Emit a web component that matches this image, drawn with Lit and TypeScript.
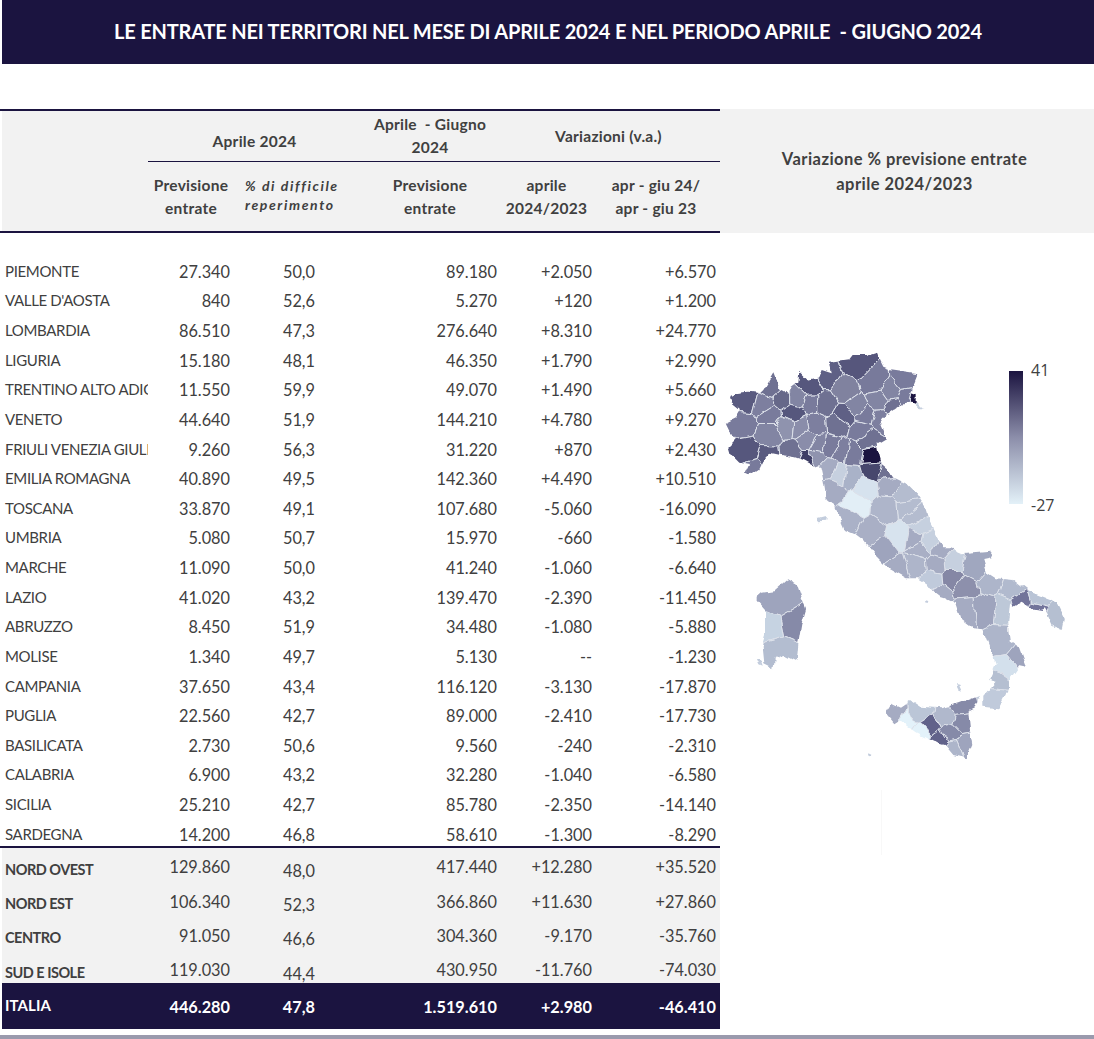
import { LitElement, html, css, svg } from "lit";
import { customElement } from "lit/decorators.js";

const regions: [string, string, string, string, string, string][] = [
  ["PIEMONTE","27.340","50,0","89.180","+2.050","+6.570"],
  ["VALLE D'AOSTA","840","52,6","5.270","+120","+1.200"],
  ["LOMBARDIA","86.510","47,3","276.640","+8.310","+24.770"],
  ["LIGURIA","15.180","48,1","46.350","+1.790","+2.990"],
  ["TRENTINO ALTO ADIGE","11.550","59,9","49.070","+1.490","+5.660"],
  ["VENETO","44.640","51,9","144.210","+4.780","+9.270"],
  ["FRIULI VENEZIA GIULIA","9.260","56,3","31.220","+870","+2.430"],
  ["EMILIA ROMAGNA","40.890","49,5","142.360","+4.490","+10.510"],
  ["TOSCANA","33.870","49,1","107.680","-5.060","-16.090"],
  ["UMBRIA","5.080","50,7","15.970","-660","-1.580"],
  ["MARCHE","11.090","50,0","41.240","-1.060","-6.640"],
  ["LAZIO","41.020","43,2","139.470","-2.390","-11.450"],
  ["ABRUZZO","8.450","51,9","34.480","-1.080","-5.880"],
  ["MOLISE","1.340","49,7","5.130","--","-1.230"],
  ["CAMPANIA","37.650","43,4","116.120","-3.130","-17.870"],
  ["PUGLIA","22.560","42,7","89.000","-2.410","-17.730"],
  ["BASILICATA","2.730","50,6","9.560","-240","-2.310"],
  ["CALABRIA","6.900","43,2","32.280","-1.040","-6.580"],
  ["SICILIA","25.210","42,7","85.780","-2.350","-14.140"],
  ["SARDEGNA","14.200","46,8","58.610","-1.300","-8.290"],
];
const groups = [
  ["NORD OVEST","129.860","48,0","417.440","+12.280","+35.520"],
  ["NORD EST","106.340","52,3","366.860","+11.630","+27.860"],
  ["CENTRO","91.050","46,6","304.360","-9.170","-35.760"],
  ["SUD E ISOLE","119.030","44,4","430.950","-11.760","-74.030"],
];
const total = ["ITALIA","446.280","47,8","1.519.610","+2.980","-46.410"];

/* Map data: a frame three times the picture's scale, with origin at (720,340). */
const land = [
  "30,170 50,160 85,155 120,160 130,150 160,100 170,125 178,145 190,150 205,165 215,140 235,125 238,98 262,122 295,115 305,90 335,100 330,65 385,58 395,45 440,45 470,35 480,60 490,80 510,88 592,100 580,130 575,160 590,165 590,185 610,205 600,205 585,190 570,188 540,195 505,220 490,225 480,235 495,270 495,295 470,310 475,335 485,375 510,395 520,410 560,430 590,460 610,490 625,540 650,590 670,625 690,625 725,640 810,632 820,645 815,655 790,660 800,695 830,715 880,720 925,755 990,780 1015,795 1035,835 1028,870 1000,860 975,805 965,810 935,805 905,785 880,800 870,790 865,840 865,870 870,905 900,925 920,980 895,975 870,1010 870,1040 865,1045 835,1105 790,1100 790,1070 830,1025 808,1020 830,970 790,865 755,862 720,835 705,790 675,775 660,770 640,755 620,730 595,715 560,715 500,680 460,640 430,600 410,585 375,570 345,500 320,480 310,420 300,375 285,380 248,360 225,352 182,345 150,338 130,360 118,385 85,407 75,405 90,372 55,365 35,345 28,320 50,298 25,270 15,250 45,235 60,210 35,190",
  "495,1120 515,1088 540,1100 570,1080 600,1100 660,1105 715,1090 780,1065 765,1105 745,1115 750,1170 757,1215 740,1255 700,1245 675,1215 640,1205 590,1180 535,1140 520,1150",
  "113,770 130,755 165,750 205,715 230,730 245,775 258,805 245,850 235,910 230,965 190,945 165,955 160,985 130,970 125,920 135,885 135,810 113,785",
];
const islets = [
  "293,538 318,531 316,542 298,544",
  "708,1032 718,1034 726,1052 716,1048",
  "620,778 628,780 626,786 618,784",
  "445,1240 454,1244 452,1250 444,1246",
  "110,958 122,962 128,980 118,976",
];
/* Each province: colour, then a centre point; borders fall midway between centres. */
const provinces: [string, number, number][] = [
  ["#5a5b80",75,182],["#797b9c",70,250],["#56577d",85,330],["#787a9b",100,390],["#7d7f9f",135,198],
  ["#6f7192",155,140],["#797b9c",150,222],["#666889",188,175],["#56577d",270,135],["#5f6085",318,108],
  ["#8285a3",230,175],["#797b9c",272,190],["#6f7192",315,190],["#56577d",218,218],["#8f93ae",200,258],
  ["#8285a3",150,285],["#8a8daa",240,262],["#7d7f9f",285,255],["#8a8daa",265,298],["#8285a3",295,315],
  ["#6f7192",352,252],["#797b9c",335,320],["#7d7f9f",362,335],["#797b9c",400,340],["#6f7192",445,295],
  ["#797b9c",430,272],["#5a5b80",148,350],["#6f7192",212,342],["#3f3f66",265,365],["#8f93ae",288,355],
  ["#56567c",410,72],["#80829f",375,150],["#787a9b",465,125],["#797b9c",555,120],["#8285a3",510,155],
  ["#1b1440",581,177],["#797b9c",562,172],["#c6d0df",603,198],["#6f7192",520,203],["#8285a3",475,180],["#8285a3",410,200],["#5f6085",372,225],
  ["#797b9c",440,230],["#7d7f9f",478,240],["#a5abc2",322,388],["#c6d0df",355,405],["#a9b2c8",395,410],
  ["#a5abc2",335,450],["#e2eef6",410,495],["#d6e2ee",440,440],["#aab1c7",385,540],["#aeb5ca",500,505],
  ["#a5abc2",505,428],["#b4bccf",560,462],["#b4bccf",565,500],["#b4bccf",590,530],["#1b1440",455,350],
  ["#47476d",458,392],["#6f7192",500,402],["#a9afc5",455,575],["#d7e3ee",535,590],["#c6d0df",600,556],
  ["#a5abc2",585,598],["#9ea4bd",490,625],["#aeb5ca",585,675],["#a5abc2",535,690],["#a9afc5",600,625],
  ["#c6d0df",622,608],["#a5abc2",662,635],["#c6d0df",695,665],["#a5abc2",650,670],["#a0a7bf",765,680],
  ["#c0cadb",640,722],["#8587a5",695,718],["#8d90ac",730,745],["#a5abc2",660,762],["#a5abc2",735,805],
  ["#9ea4bd",795,800],["#adb5ca",815,725],["#b1bace",875,745],["#bdc8d8",850,805],["#72749a",905,790],["#72749a",948,806],
  ["#b9c4d6",955,775],["#b5bfd1",1012,830],["#adb5ca",845,905],["#9ea4bd",900,950],["#d3e0ec",858,985],
  ["#b5bfd1",830,1025],["#c0cadb",825,1070],["#a5abc2",518,1120],["#bbc6d7",600,1118],["#e3f2fa",560,1150],["#e3f2fa",605,1180],
  ["#61628a",628,1160],["#61628a",660,1200],["#b0b8cc",680,1135],["#868aa8",720,1098],["#868aa8",725,1145],["#868aa8",690,1180],
  ["#9ea4bd",738,1215],["#adb5ca",700,1230],["#9ea4bd",180,790],["#868aa8",215,850],["#c6d3e2",160,860],
  ["#b3bdd0",180,935],
];

/* Cell of province i: the whole frame cut by the midline towards every other centre. */
function cell(i: number): string {
  let poly: [number, number][] = [[-20, -20], [1150, -20], [1150, 1300], [-20, 1300]];
  const [, ax, ay] = provinces[i];
  provinces.forEach(([, bx, by], j) => {
    if (j === i) return;
    const mx = (ax + bx) / 2, my = (ay + by) / 2, nx = bx - ax, ny = by - ay;
    const side = (p: [number, number]) => (p[0] - mx) * nx + (p[1] - my) * ny;
    const out: [number, number][] = [];
    poly.forEach((p, k) => {
      const q = poly[(k + 1) % poly.length];
      const sp = side(p), sq = side(q);
      if (sp <= 0) out.push(p);
      if (sp < 0 !== sq < 0) {
        const t = sp / (sp - sq);
        out.push([p[0] + (q[0] - p[0]) * t, p[1] + (q[1] - p[1]) * t]);
      }
    });
    poly = out;
  });
  return poly.map((p) => `${p[0].toFixed(1)},${p[1].toFixed(1)}`).join(" ");
}

@customElement("app-root")
export class AppRoot extends LitElement {
  static styles = css`
    :host { display: block; width: 1094px; height: 1039px; overflow: hidden; background: #fff;
      font-family: Lato, "Open Sans", sans-serif; color: #404040; }
    .title { height: 64px; margin-left: 2px; background: #1b1440; color: #fff; display: flex;
      align-items: center; justify-content: center; font-weight: 700; font-size: 20px;
      letter-spacing: -0.2px; padding-bottom: 2px; box-sizing: border-box; }
    .main { display: flex; margin-top: 45px; height: 926px; }
    .table { width: 720px; flex: none; }
    .side { flex: 1; display: flex; flex-direction: column; }
    .side-head { height: 124px; background: #f2f2f2; display: flex; flex-direction: column; align-items: center;
      padding: 38px 5px 0 0; box-sizing: border-box; font-weight: 700; font-size: 16.5px; letter-spacing: 0.45px;
      line-height: 25px; color: #404040; }
    .map { display: block; width: 374px; height: 802px; }
    .head { height: 123.5px; box-sizing: border-box; border-top: 2px solid #1b1440; border-bottom: 2px solid #1b1440;
      background: linear-gradient(#f2f2f2, #f2f2f2) 2px 0 no-repeat; display: grid;
      grid-template-columns: 148px 82px 85px 182px 95px 128px; grid-template-rows: 50.5px 68.5px;
      font-weight: 700; font-size: 15.5px; letter-spacing: 0.25px; line-height: 23px; text-align: center; white-space: nowrap; }
    .h-cell { display: flex; flex-direction: column; align-items: center; justify-content: center; box-sizing: border-box; }
    .h-top { border-bottom: 1.5px solid #1b1440; }
    .h-a { grid-column: 2 / span 2; padding-top: 12px; padding-left: 46px; }
    .h-b { padding-left: 48px; }
    .h-c { grid-column: 5 / span 2; padding-top: 2px; padding-bottom: 0; }
    .h-sub { padding-top: 2px; padding-left: 4px; }
    .h-wide { padding-left: 48px; }
    .h-i { font-style: italic; font-size: 14px; letter-spacing: 1.6px; line-height: 19px; align-items: flex-start;
      padding-left: 15px; padding-bottom: 1px; text-align: left; }
    .h-last { padding-left: 0; margin-left: 0; }
    .rows { height: 613.5px; padding-top: 24px; box-sizing: border-box; }
    .row, .grow, .trow { display: grid; grid-template-columns: 148px 82px 85px 182px 95px 124px; padding-right: 4px;
      font-size: 16.3px; align-items: center; text-align: right; }
    .row { height: 29.63px; }
    .name { text-align: left; padding-left: 5px; white-space: nowrap; overflow: hidden; font-size: 15px; letter-spacing: -0.35px; }
    .row .name { padding-bottom: 1px; }
    .groups { height: 137px; box-sizing: border-box; border-top: 2px solid #1b1440; padding-top: 1.5px;
      background: linear-gradient(#f2f2f2, #f2f2f2) 2px 0 no-repeat; }
    .grow { height: 34.4px; }
    .grow .name { font-weight: 700; padding-top: 5px; overflow: visible; font-size: 14.5px; letter-spacing: -0.5px; }
    .grow .pct { padding-top: 7px; }
    .total { height: 46px; margin-left: 2px; background: #1b1440; color: #fff; font-weight: 700; }
    .trow { height: 46px; margin-left: -2px; }
    .trow .name { padding-bottom: 2px; color: #fff; letter-spacing: 0.1px; }
    .strip { height: 4px; background: #9a9aad; }
    text { font-family: "Open Sans", sans-serif; font-size: 16px; fill: #404040; }
  `;

  private cells(r: string[]) {
    return html`<div class="name">${r[0]}</div><div>${r[1]}</div><div class="pct">${r[2]}</div>
      <div>${r[3]}</div><div>${r[4]}</div><div>${r[5]}</div>`;
  }

  render() {
    return html`
      <div class="title">LE ENTRATE NEI TERRITORI NEL MESE DI APRILE 2024 E NEL PERIODO APRILE&nbsp; - GIUGNO 2024</div>
      <div class="main">
        <div class="table">
          <div class="head">
            <div></div>
            <div class="h-cell h-top h-a">Aprile 2024</div>
            <div class="h-cell h-top h-b"><span>Aprile&nbsp; - Giugno</span><span>2024</span></div>
            <div class="h-cell h-top h-c">Variazioni (v.a.)</div>
            <div></div>
            <div class="h-cell h-sub"><span>Previsione</span><span>entrate</span></div>
            <div class="h-cell h-i"><span>% di difficile</span><span>reperimento</span></div>
            <div class="h-cell h-sub h-wide"><span>Previsione</span><span>entrate</span></div>
            <div class="h-cell h-sub"><span>aprile</span><span>2024/2023</span></div>
            <div class="h-cell h-sub h-last"><span>apr - giu 24/</span><span>apr - giu 23</span></div>
          </div>
          <div class="rows">${regions.map((r) => html`<div class="row">${this.cells(r)}</div>`)}</div>
          <div class="groups">${groups.map((r) => html`<div class="grow">${this.cells(r)}</div>`)}</div>
          <div class="total"><div class="trow">${this.cells(total)}</div></div>
        </div>
        <div class="side">
          <div class="side-head"><span>Variazione % previsione entrate</span><span>aprile 2024/2023</span></div>
          <svg class="map" viewBox="720 233 374 802" xmlns="http://www.w3.org/2000/svg">
            <defs>
              <linearGradient id="scale" x1="0" y1="0" x2="0" y2="1">
                <stop offset="0" stop-color="#1b1440"></stop>
                <stop offset="0.5" stop-color="#8c8eaa"></stop>
                <stop offset="1" stop-color="#e3f1f8"></stop>
              </linearGradient>
              <clipPath id="land">${land.map((p) => svg`<polygon points=${p}></polygon>`)}</clipPath>
              <filter id="soft" x="-5%" y="-5%" width="110%" height="110%" color-interpolation-filters="sRGB">
                <feTurbulence type="fractalNoise" baseFrequency="0.09" numOctaves="2" seed="4" result="n"></feTurbulence>
                <feDisplacementMap in="SourceGraphic" in2="n" scale="7" xChannelSelector="R" yChannelSelector="G" result="d"></feDisplacementMap>
                <feGaussianBlur in="d" stdDeviation="0.45"></feGaussianBlur>
              </filter>
            </defs>
            <g filter="url(#soft)">
              <g transform="translate(720 340) scale(0.3333)">
                <g clip-path="url(#land)">
                  ${provinces.map((p, i) => svg`<polygon points=${cell(i)} fill=${p[0]} stroke="#dde1ea" stroke-width="3"></polygon>`)}
                </g>
                ${islets.map((p) => svg`<polygon points=${p} fill="#c3cddd"></polygon>`)}
              </g>
            </g>
            <rect x="881" y="790" width="1" height="65" fill="#f8f8f8"></rect>
            <rect x="1009" y="371" width="14" height="133" fill="url(#scale)"></rect>
            <text x="1031" y="376">41</text>
            <text x="1031" y="511">-27</text>
          </svg>
        </div>
      </div>
      <div class="strip"></div>
    `;
  }
}
